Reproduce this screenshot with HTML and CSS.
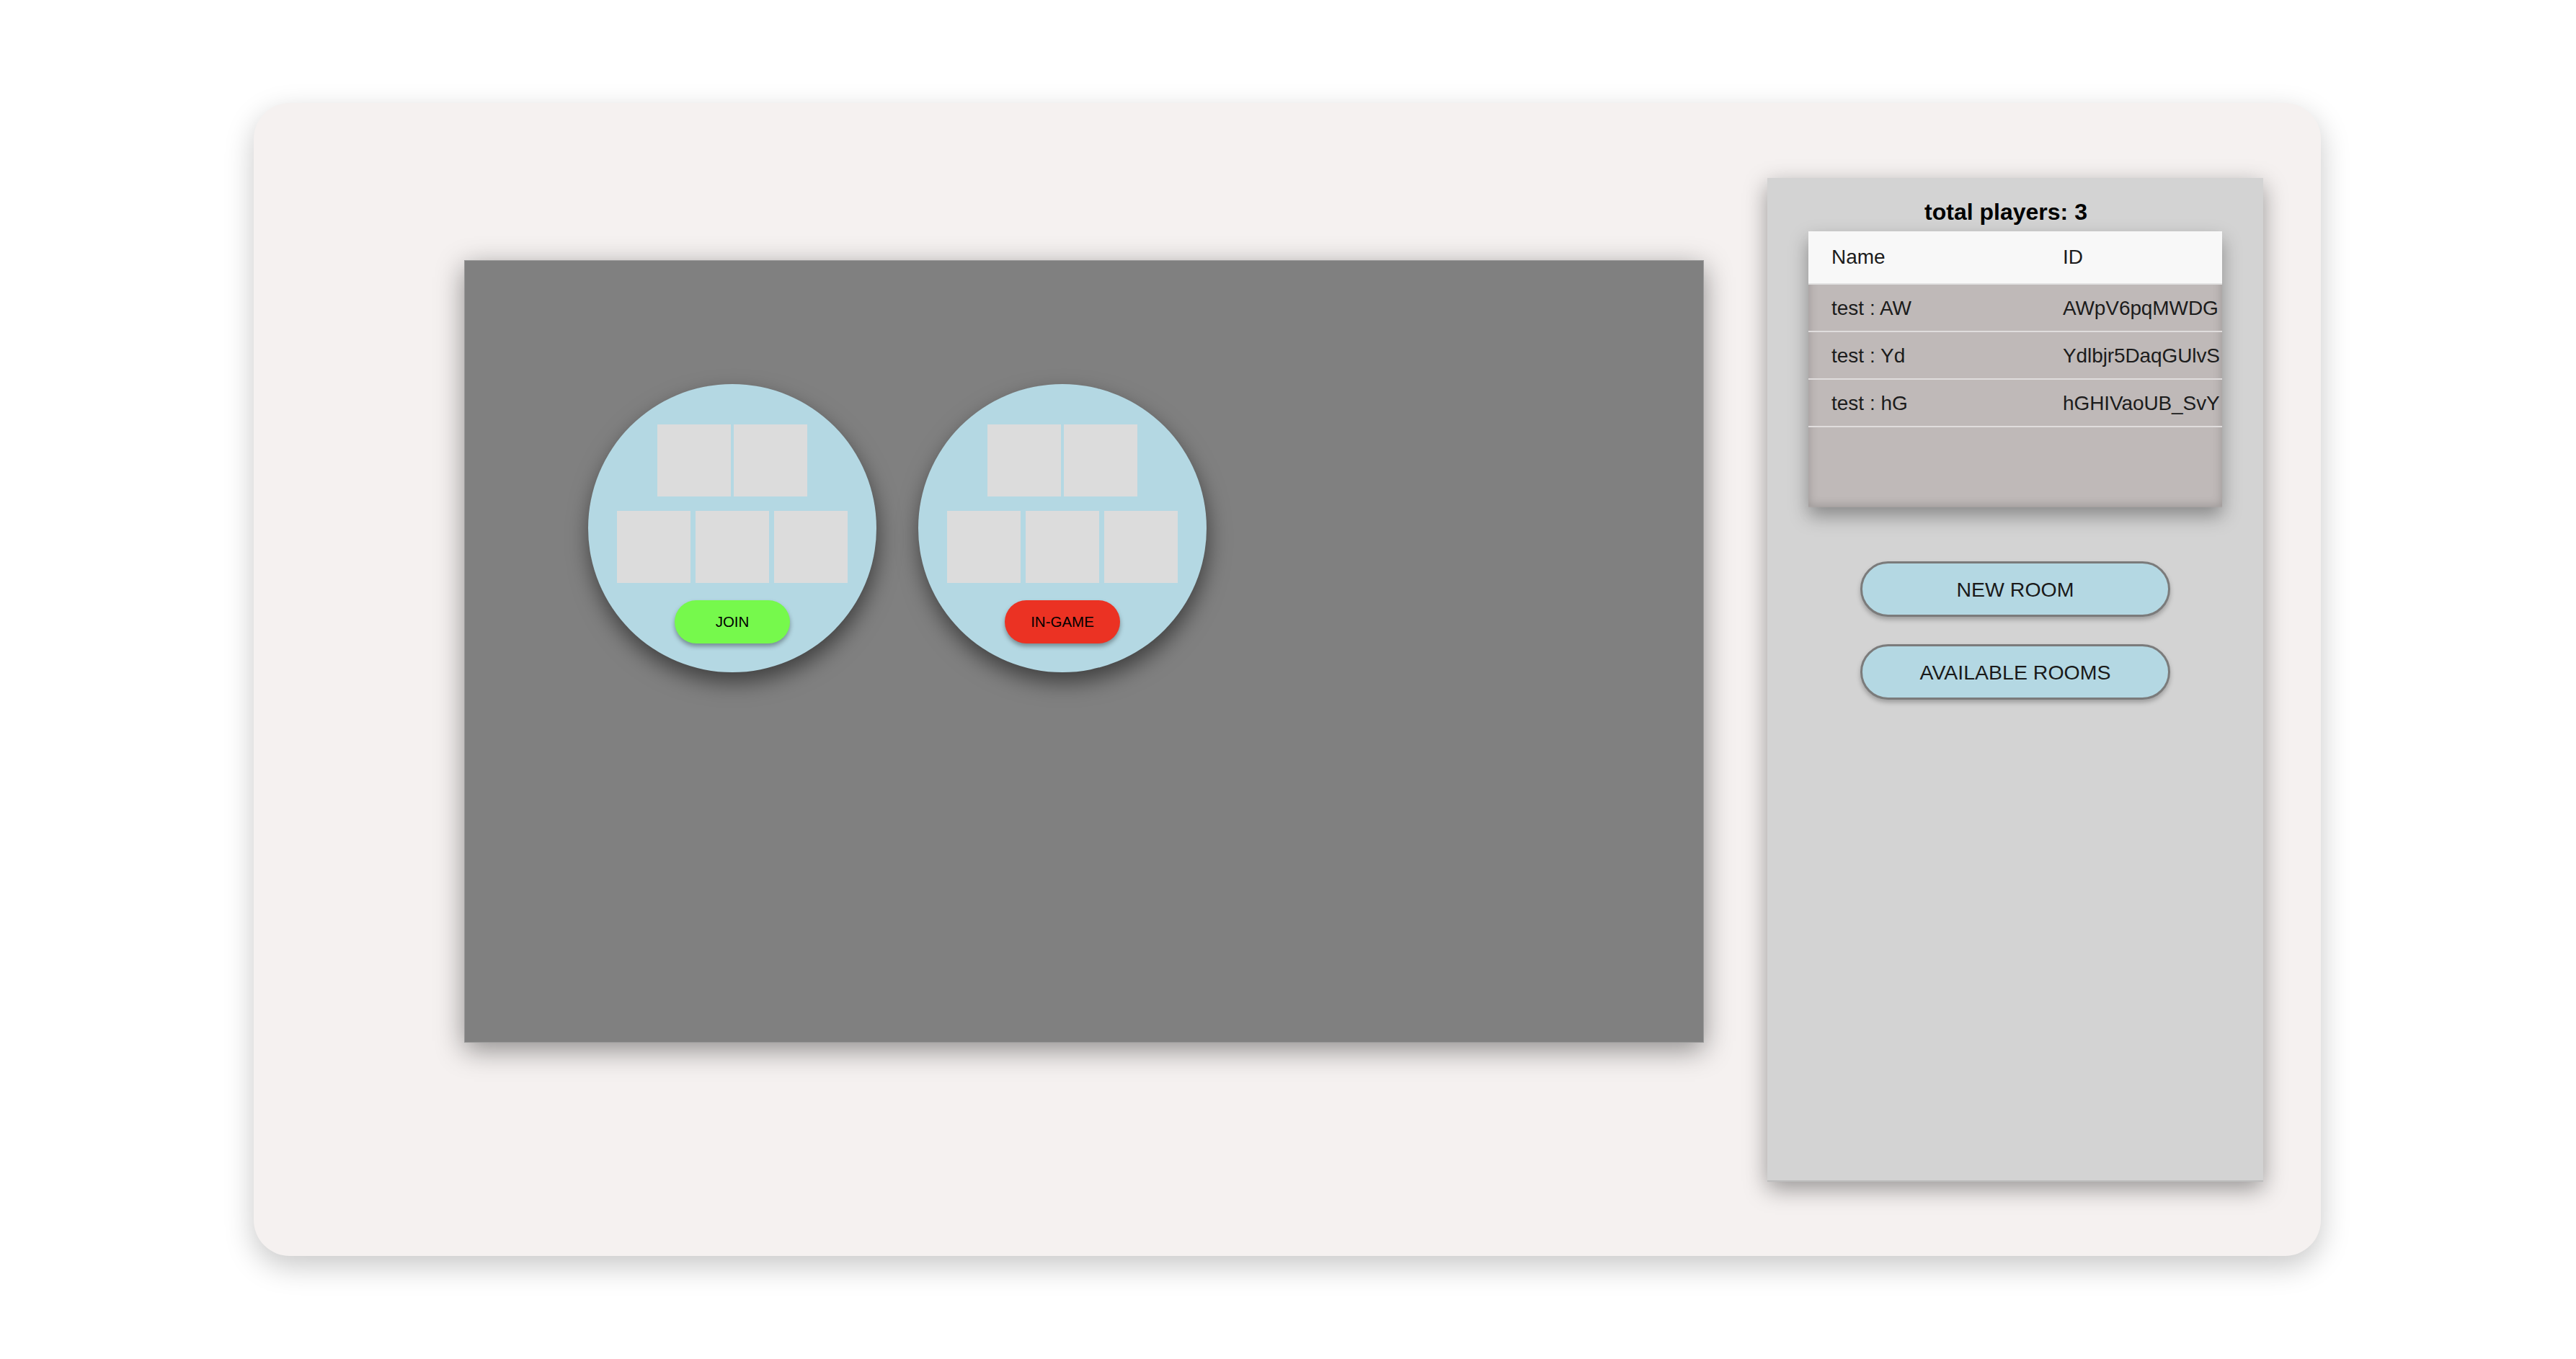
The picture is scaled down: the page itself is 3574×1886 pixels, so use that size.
FILE: index.html
```html
<!DOCTYPE html>
<html lang="en">
<head>
<meta charset="utf-8">
<title>Lobby</title>
<link rel="stylesheet" href="styles.css">
</head>
<body>
<div class="card">
  <div class="canvas">
    <div class="room">
      <div class="seats seats-top">
        <div class="seat"></div><div class="seat"></div>
      </div>
      <div class="seats seats-bottom">
        <div class="seat"></div><div class="seat"></div><div class="seat"></div>
      </div>
      <div class="room-btn join">JOIN</div>
    </div>
    <div class="room">
      <div class="seats seats-top">
        <div class="seat"></div><div class="seat"></div>
      </div>
      <div class="seats seats-bottom">
        <div class="seat"></div><div class="seat"></div><div class="seat"></div>
      </div>
      <div class="room-btn ingame">IN-GAME</div>
    </div>
  </div>
  <div class="panel">
    <div class="title">total players: 3</div>
    <div class="players">
      <div class="prow phead"><div class="pname">Name</div><div class="pid">ID</div></div>
      <div class="prow"><div class="pname">test : AW</div><div class="pid">AWpV6pqMWDG</div></div>
      <div class="prow"><div class="pname">test : Yd</div><div class="pid">Ydlbjr5DaqGUlvS</div></div>
      <div class="prow"><div class="pname">test : hG</div><div class="pid">hGHIVaoUB_SvY</div></div>
    </div>
    <div class="actions">
      <div class="pill">NEW ROOM</div>
      <div class="pill">AVAILABLE ROOMS</div>
    </div>
  </div>
</div>
</body>
</html>
```
FILE: styles.css
```css
html, body {
  margin: 0;
  padding: 0;
  background: #ffffff;
}
body {
  font-family: "Liberation Sans", Arial, Helvetica, sans-serif;
  color: #111;
  padding: 143px 0 0 352px;
  height: 1886px;
  box-sizing: border-box;
  overflow: hidden;
}
.card {
  width: 2868px;
  height: 1600px;
  box-sizing: border-box;
  background: #f5f1f0;
  border-radius: 50px;
  box-shadow: 0 14px 40px rgba(0, 0, 0, 0.22);
  display: flex;
  align-items: flex-start;
  padding: 104px 80px 0 292px;
}
.canvas {
  margin-top: 114px;
  width: 1720px;
  height: 1086px;
  box-sizing: border-box;
  background: #808080;
  border: 1px solid #9a9a9a;
  box-shadow: 0 10px 36px rgba(0, 0, 0, 0.42);
  display: flex;
  align-items: flex-start;
  gap: 58px;
  padding: 171px 0 0 171px;
}
.room {
  width: 400px;
  height: 400px;
  border-radius: 50%;
  background: #b4d8e3;
  box-shadow: 2px 14px 30px rgba(0, 0, 0, 0.5);
  display: flex;
  flex-direction: column;
  align-items: center;
  padding-top: 56px;
  box-sizing: border-box;
}
.seats {
  display: flex;
}
.seats-top {
  gap: 4px;
}
.seats-bottom {
  gap: 7px;
  margin-top: 20px;
}
.seat {
  width: 102px;
  height: 100px;
  background: #dcdcdc;
}
.room-btn {
  margin-top: 24px;
  width: 160px;
  height: 60px;
  border-radius: 30px;
  display: flex;
  align-items: center;
  justify-content: center;
  font-size: 20.5px;
  color: #000;
  box-shadow: 0 4px 6px rgba(0, 0, 0, 0.35);
}
.join {
  background: #76f94c;
}
.ingame {
  background: #eb3223;
}
.panel {
  margin-left: 88px;
  width: 688px;
  height: 1393px;
  box-sizing: border-box;
  background: #d3d3d3;
  border-bottom: 2px solid #bdbdbd;
  box-shadow: 0 10px 30px rgba(0, 0, 0, 0.38);
  display: flex;
  flex-direction: column;
  align-items: center;
  padding-top: 29px;
}
.title {
  font-weight: bold;
  font-size: 32px;
  line-height: 36px;
  height: 36px;
  margin-bottom: 9px;
  padding-right: 26px;
  color: #000;
}
.players {
  width: 574px;
  height: 383px;
  overflow: hidden;
  background: #bfb9b8;
  border-bottom: 2px solid #a9a4a3;
  box-sizing: border-box;
  box-shadow: inset 0 0 14px rgba(0, 0, 0, 0.2), 0 12px 24px rgba(0, 0, 0, 0.35);
}
.prow {
  display: flex;
  align-items: center;
  height: 66px;
  box-sizing: border-box;
  border-bottom: 2px solid #e0dddd;
  padding-top: 2px;
  font-size: 28px;
  color: #1c1c1c;
  white-space: nowrap;
}
.phead {
  height: 74px;
  padding-top: 0;
  background: #f8f8f8;
  border-bottom-color: #e2e2e2;
}
.pname {
  flex: 0 0 321px;
  padding-left: 32px;
}
.pid {
  flex: 0 0 auto;
  letter-spacing: -0.1px;
}
.actions {
  margin-top: 75px;
  display: flex;
  flex-direction: column;
  gap: 38px;
}
.pill {
  width: 430px;
  height: 77px;
  box-sizing: border-box;
  border: 3px solid #7b7b7b;
  border-radius: 39px;
  background: #b4d8e3;
  box-shadow: 0 4px 6px rgba(0, 0, 0, 0.25);
  display: flex;
  align-items: center;
  justify-content: center;
  padding-top: 2px;
  font-size: 28.5px;
  color: #1a1a1a;
}
```
